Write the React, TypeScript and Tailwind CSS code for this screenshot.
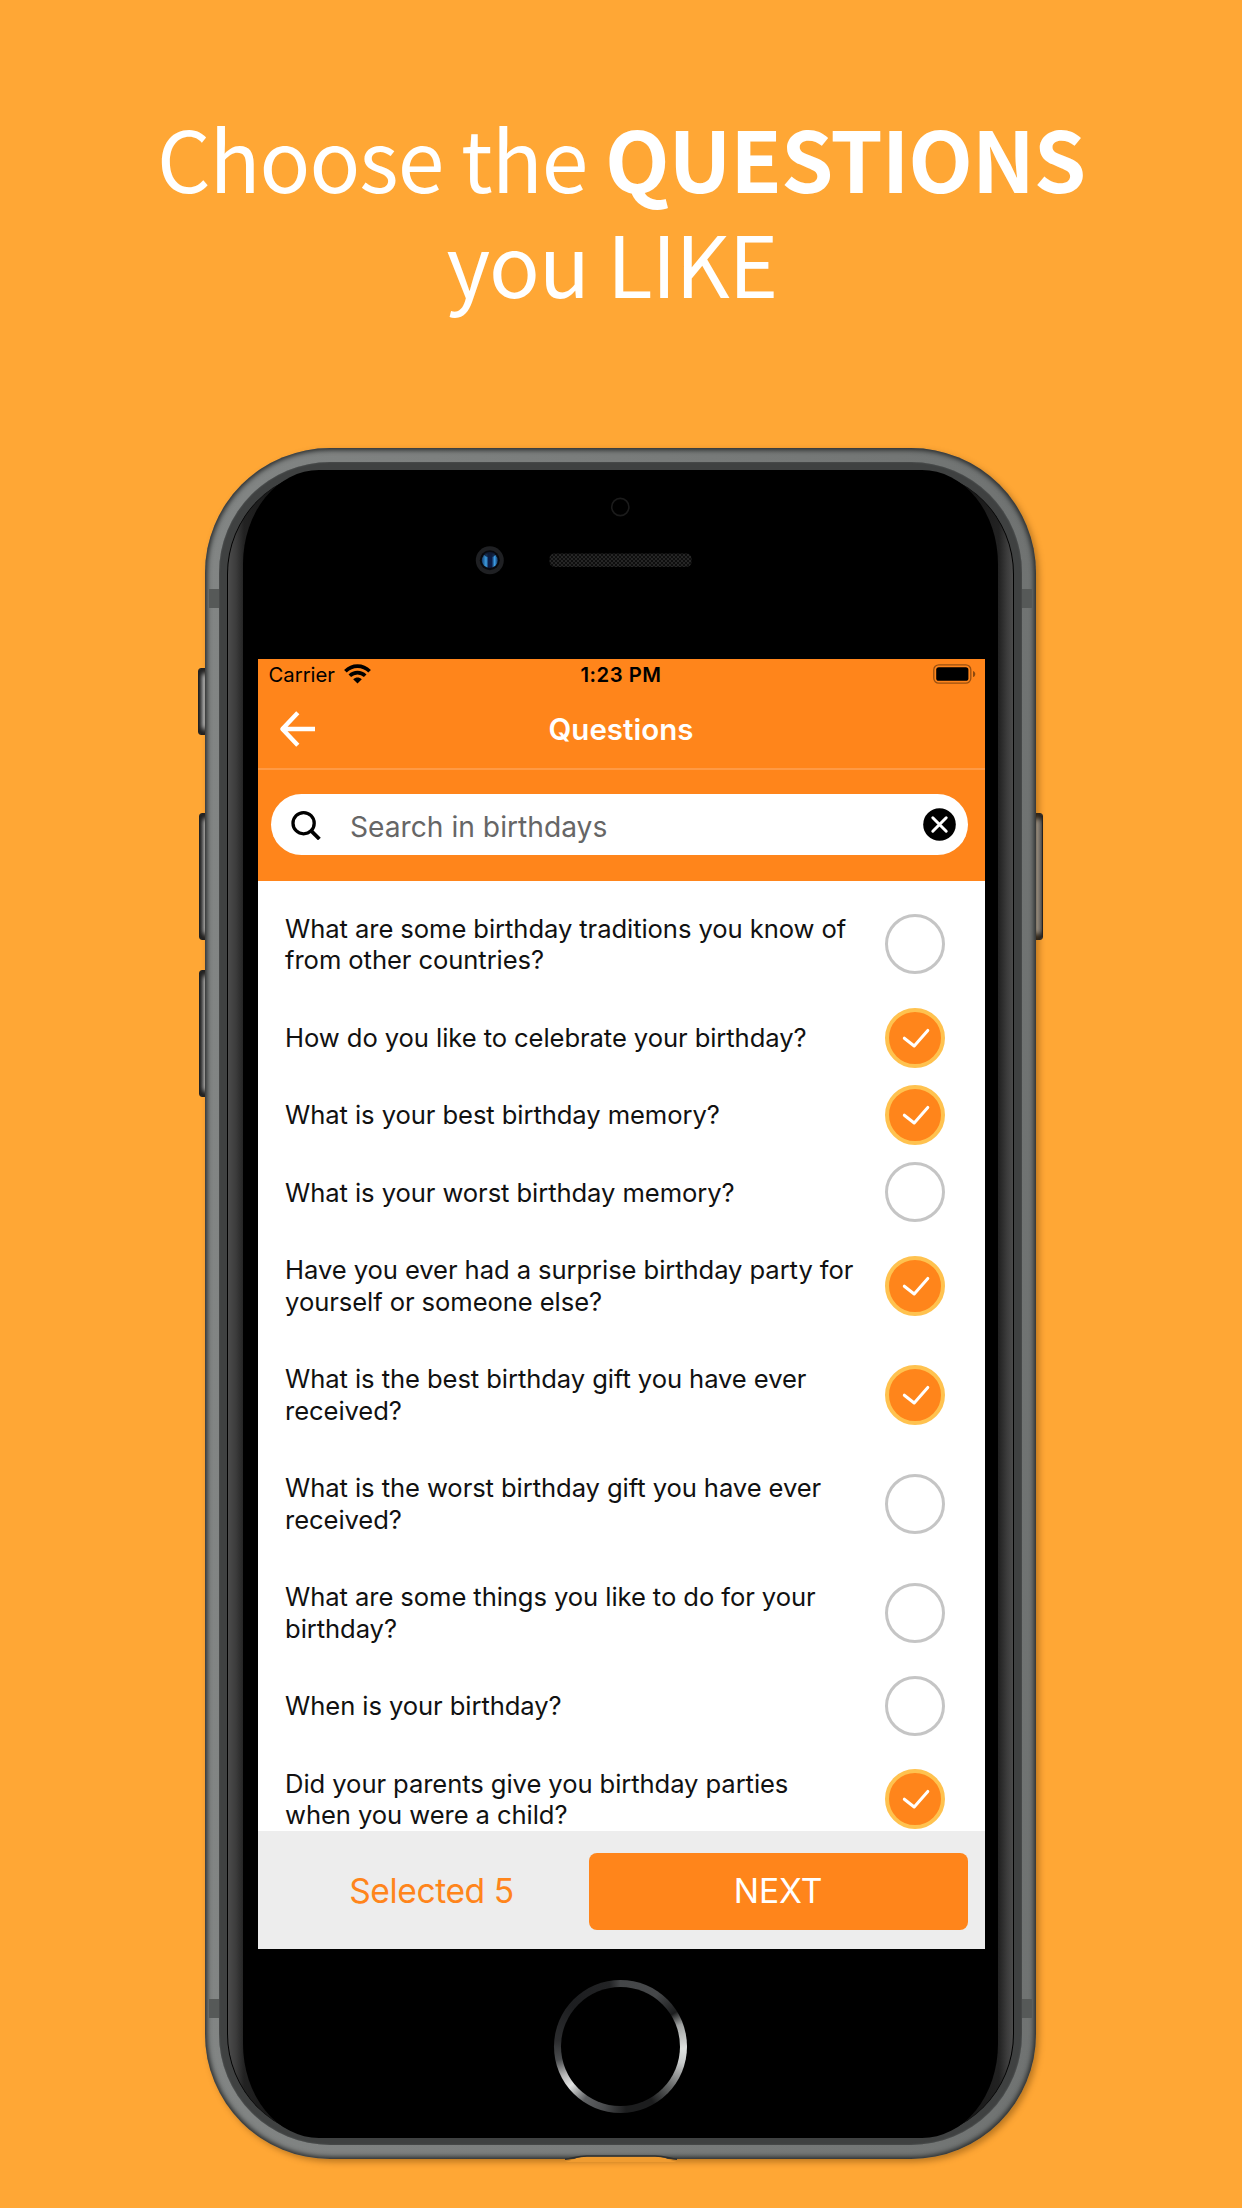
type Question = { lines: string[]; selected: boolean };

const questions: Question[] = [
  { lines: ["What are some birthday traditions you know of", "from other countries?"], selected: false },
  { lines: ["How do you like to celebrate your birthday?"], selected: true },
  { lines: ["What is your best birthday memory?"], selected: true },
  { lines: ["What is your worst birthday memory?"], selected: false },
  { lines: ["Have you ever had a surprise birthday party for", "yourself or someone else?"], selected: true },
  { lines: ["What is the best birthday gift you have ever", "received?"], selected: true },
  { lines: ["What is the worst birthday gift you have ever", "received?"], selected: false },
  { lines: ["What are some things you like to do for your", "birthday?"], selected: false },
  { lines: ["When is your birthday?"], selected: false },
  { lines: ["Did your parents give you birthday parties", "when you were a child?"], selected: true },
];

function Check({ selected }: { selected: boolean }) {
  if (!selected) {
    return <span className="size-[60px] shrink-0 rounded-full border-[3px] border-[#c5c5c5] bg-white" />;
  }
  return (
    <span className="size-[60px] shrink-0 rounded-full border-[4px] border-[#ffc24f] bg-[#ff851b]">
      <svg viewBox="4 4 52 52" className="size-[52px]" fill="none" stroke="#fff" strokeWidth="3" strokeLinecap="round" strokeLinejoin="round">
        <path d="M19.3 30.2 29.2 38 42.8 22.4" />
      </svg>
    </span>
  );
}

function QuestionRow({ lines, selected }: Question) {
  return (
    <li className={`flex shrink-0 items-center justify-between pr-[39.5px] pl-[27.6px] ${lines.length > 1 ? "h-[109.1px]" : "h-[77.4px]"}`}>
      <p className="text-[25.6px] leading-[31.6px] tracking-[-0.08px] whitespace-nowrap text-[#111]">
        {lines.map((line) => (
          <span key={line} className="block">{line}</span>
        ))}
      </p>
      <Check selected={selected} />
    </li>
  );
}

function StatusBar() {
  return (
    <div className="relative flex h-[33px] items-center justify-between pr-[9px] pl-[11px] text-[20.3px] text-black">
      <div className="flex items-center gap-[9px]">
        <span>Carrier</span>
        <svg viewBox="0 0 27 20" className="mt-[-2px] h-[20px] w-[27px]" fill="none" stroke="#000" strokeWidth="3.7">
          <path d="M1.4 7.2C8.3.4 18.7.4 25.6 7.2" />
          <path d="M5.8 11.8c4.4-4.3 11-4.3 15.4 0" />
          <path d="M13.5 19.6 9.2 15.2c2.5-2.2 6.1-2.2 8.6 0Z" fill="#000" stroke="none" />
        </svg>
      </div>
      <span className="absolute inset-x-0 text-center font-semibold tracking-[0.5px]">1:23 PM</span>
      <svg viewBox="0 0 43 20" className="mt-[-2px] h-[20px] w-[43px]">
        <rect x="0.8" y="0.8" width="37" height="18.4" rx="5" fill="none" stroke="#000" strokeOpacity=".4" strokeWidth="1.3" />
        <rect x="3.2" y="3.2" width="32.2" height="13.6" rx="2.6" />
        <path d="M40 6.9c3 .9 3 5.3 0 6.2Z" fillOpacity=".45" />
      </svg>
    </div>
  );
}

function Screen() {
  return (
    <div className="flex h-[1290.2px] w-[727px] flex-col overflow-hidden bg-white">
      <header className="h-[222px] shrink-0 bg-[#ff851b]">
        <StatusBar />
        <div className="relative flex h-[78px] items-center border-b-2 border-[#ff9a45] pb-[1px]">
          <svg viewBox="0 0 36 36" className="ml-[21px] h-[36px] w-[36px]" fill="none" stroke="#fff" strokeWidth="4.4" strokeLinejoin="round">
            <path d="M18.8 1.8 3.4 18l15.4 16.2M3.4 18H36" />
          </svg>
          <h2 className="absolute inset-x-0 text-center text-[29.5px] font-semibold text-white">Questions</h2>
        </div>
        <div className="mt-[24px] ml-[13px] flex h-[61.5px] w-[697.5px] items-center rounded-full bg-white">
          <svg viewBox="0 0 30 30" className="ml-[20.5px] size-[30px] shrink-0" fill="none" stroke="#000" strokeWidth="3.3">
            <circle cx="12.6" cy="13.2" r="10.6" />
            <path d="M20.2 20.8 28.4 29" strokeWidth="3.8" />
          </svg>
          <span className="mt-[5px] ml-[29px] flex-1 text-[28.2px] text-[#666]">Search in birthdays</span>
          <svg viewBox="0 0 33 33" className="mt-[-1px] mr-[12.5px] size-[33px] shrink-0">
            <circle cx="16.5" cy="16.5" r="16.3" />
            <path d="m9.8 9.8 13.4 13.4M23.2 9.8 9.8 23.2" stroke="#fff" strokeWidth="3" strokeLinecap="round" />
          </svg>
        </div>
      </header>
      <ul className="flex h-[948px] shrink-0 flex-col overflow-hidden pt-[8.8px]">
        {questions.map((q) => (
          <QuestionRow key={q.lines[0]} {...q} />
        ))}
      </ul>
      <footer className="mt-[2.5px] flex flex-1 items-center justify-between bg-[#ededed] pt-[2px] pr-[17px]">
        <span className="flex-1 pl-[17px] text-center text-[33.6px] tracking-[-0.4px] text-[#ff851b]">Selected 5</span>
        <button className="h-[77.5px] w-[379px] rounded-[8px] bg-[#ff851b] text-[33.6px] text-white">NEXT</button>
      </footer>
    </div>
  );
}

function SideButton({ place }: { place: string }) {
  return (
    <span
      className={`absolute w-[12px] rounded-[3px] border border-[#222] bg-linear-to-r from-[#2c2c2c] via-[#a6a8a8] to-[#666] shadow-[inset_0_7px_5px_-2px_#222,inset_0_-7px_5px_-2px_#222] ${place}`}
    />
  );
}

function FrontSensors() {
  return (
    <svg viewBox="0 0 755 188" className="absolute top-0 left-0 h-[188px] w-[755px]">
      <defs>
        <pattern id="mesh" width="4" height="4" patternUnits="userSpaceOnUse">
          <rect width="4" height="4" fill="#0e0e0e" />
          <path d="M0 0h2v2H0zM2 2h2v2H2z" fill="#262626" />
        </pattern>
        <linearGradient id="lens">
          <stop offset="0" stopColor="#143a6b" />
          <stop offset=".27" stopColor="#3da0e4" />
          <stop offset=".42" stopColor="#0c1b45" />
          <stop offset=".62" stopColor="#0c1b45" />
          <stop offset=".8" stopColor="#3c9fe8" />
          <stop offset="1" stopColor="#12315c" />
        </linearGradient>
      </defs>
      <circle cx="377.3" cy="37" r="8.6" fill="none" stroke="#1b1b1b" strokeWidth="1.6" />
      <rect x="306.5" y="83.5" width="142" height="13.5" rx="5" fill="url(#mesh)" />
      <circle cx="246.8" cy="90.3" r="14" fill="#1f2023" />
      <circle cx="246.8" cy="90.3" r="10" fill="#08090d" />
      <ellipse cx="246.8" cy="90.6" rx="8" ry="7.4" fill="url(#lens)" />
      <ellipse cx="246.8" cy="84.6" rx="5.5" ry="2.6" fill="#101d38" opacity=".85" />
    </svg>
  );
}

function Phone() {
  return (
    <div className="relative ml-[205px] w-[831px]">
      <SideButton place="left-[-7px] top-[220.5px] h-[67px]" />
      <SideButton place="left-[-6.5px] top-[365px] h-[127px]" />
      <SideButton place="left-[-6.5px] top-[522px] h-[127px]" />
      <SideButton place="left-[826px] top-[365px] h-[127px]" />
      <div className="relative h-[1711px] rounded-[125px] bg-linear-to-r from-[#828584] to-[#707372] pt-[14.5px] pr-[14.3px] pb-[13.2px] pl-[14px] shadow-[inset_0_0_5px_2px_#262828,3px_3px_6px_rgba(90,50,0,0.4)]">
        <span className="absolute top-[141.5px] left-[4px] h-[19px] w-[823px] bg-[#565958]" />
        <span className="absolute top-[1551.5px] left-[4px] h-[19px] w-[823px] bg-[#565958]" />
        <div className="relative h-full rounded-[111px] bg-[#3f4141] pt-[7.7px] pr-[7.7px] pb-[7.3px] pl-[7.5px] shadow-[inset_0_0_2px_#5d6060]">
          <div className="h-full rounded-[104px] border-x border-black bg-[linear-gradient(to_right,#4c4c4c_0,#3c3c3c_8px,#222_16px,#191919_40px,#000_85px,#000_702px,#191919_747px,#222_771px,#3c3c3c_779px,#505050_787px)] px-[15px]">
            <div className="relative h-full rounded-[76px/94px] bg-black pt-[189.3px] pl-[15px]">
              <FrontSensors />
              <Screen />
              <div className="mt-[30.5px] ml-[296px] size-[133px] rounded-full bg-[conic-gradient(#444648_0deg,#46484a_35deg,#1c1d1e_58deg,#a0a2a1_70deg,#dfe2e0_92deg,#c8caca_105deg,#606262_130deg,#1c1d1e_150deg,#1c1d1e_175deg,#4a4c4e_195deg,#5e6062_214deg,#e2e3e3_232deg,#b8b8b8_243deg,#4a4c4e_258deg,#2c2d2f_275deg,#1d1e20_310deg,#222325_350deg,#444648_360deg)] p-[7px]">
                <div className="size-full rounded-full bg-black" />
              </div>
            </div>
          </div>
        </div>
        <svg viewBox="0 0 831 10" className="absolute top-[1704px] left-0 h-[10px] w-[831px]">
          <path d="M360 10C368 8.6 371 4.6 382 4.6h68C461 4.6 464 8.6 472 10Z" fill="#f09c30" />
          <path d="M360 7.2C368 6.6 371 4 382 4h68C461 4 464 6.6 472 7.2" fill="none" stroke="#2e3030" strokeWidth="1.6" />
        </svg>
      </div>
    </div>
  );
}

export default function App() {
  return (
    <main className="flex h-[2208px] w-[1242px] flex-col overflow-hidden bg-[#ffa735] font-[Inter,'Liberation_Sans',sans-serif]">
      <h1 className="h-[447.5px] shrink-0 pt-[103.5px] text-center font-['Noto_Sans_CJK_SC','Open_Sans',sans-serif] text-[84px] leading-[105px] font-normal whitespace-nowrap text-white">
        <span className="block tracking-[-1px]">
          Choose the <strong className="font-bold tracking-[-1.1px]">QUESTIONS</strong>
        </span>
        <span className="block pr-[18px] tracking-[-0.9px]">you LIKE</span>
      </h1>
      <Phone />
    </main>
  );
}
